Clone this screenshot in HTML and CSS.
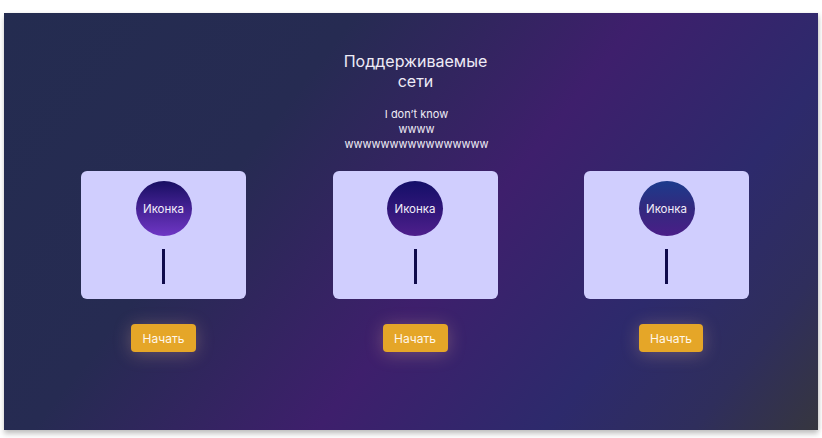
FILE: index.html
```html
<!DOCTYPE html>
<html lang="ru">
<head>
<meta charset="utf-8">
<link rel="stylesheet" href="styles.css">
</head>
<body>
<main class="panel">
  <header class="intro">
    <h1 class="title"><span class="line">Поддерживаемые</span><span class="line">сети</span></h1>
    <p class="subtitle"><span class="line">I don’t know</span><span class="line">wwww</span><span class="line">wwwwwwwwwwwwwwww</span></p>
  </header>
  <section class="networks">
    <div class="network">
      <div class="card">
        <div class="icon icon-1">Иконка</div>
        <div class="bar"></div>
      </div>
      <button class="start">Начать</button>
    </div>
    <div class="network">
      <div class="card">
        <div class="icon icon-2">Иконка</div>
        <div class="bar"></div>
      </div>
      <button class="start">Начать</button>
    </div>
    <div class="network">
      <div class="card">
        <div class="icon icon-3">Иконка</div>
        <div class="bar"></div>
      </div>
      <button class="start start-shift">Начать</button>
    </div>
  </section>
</main>
</body>
</html>
```
FILE: styles.css
```css
* { box-sizing: border-box; }
html, body { margin: 0; padding: 0; background: #ffffff; }
body {
  padding: 13px 4px 8px 4px;
  font-family: Inter, "Noto Sans", sans-serif;
}
.panel {
  height: 417px;
  background: linear-gradient(128deg, #242c50 0%, #262b52 31%, #3e1f6c 56%, #2d2a6c 76%, #2f2e5c 89%, #36363f 100%);
  box-shadow: 0 4px 5px rgba(0, 0, 0, 0.22), 2px 0 4px rgba(0, 0, 0, 0.08);
  padding-top: 38px;
  display: flex;
  flex-direction: column;
}
.intro {
  display: flex;
  flex-direction: column;
  align-items: center;
  color: #eeebf6;
  text-align: center;
  padding-left: 9px;
}
.line { display: block; }
.title {
  margin: 0;
  font-size: 16px;
  line-height: 20px;
  font-weight: 400;
}
.subtitle {
  margin: 16px 0 0 0;
  font-size: 11px;
  line-height: 15px;
  padding-left: 2px;
}
.networks {
  margin-top: 19px;
  display: flex;
  gap: 86.5px;
  padding-left: 77px;
}
.network {
  width: 165px;
  display: flex;
  flex-direction: column;
  align-items: center;
}
.card {
  width: 165px;
  height: 128px;
  background: #d0cefe;
  border-radius: 6px;
  padding-top: 10px;
  display: flex;
  flex-direction: column;
  align-items: center;
}
.icon {
  width: 56px;
  height: 55px;
  border-radius: 50%;
  display: flex;
  align-items: center;
  justify-content: center;
  color: #f2eefa;
  font-size: 11.5px;
}
.icon-1 { background: linear-gradient(180deg, #180f62 0%, #4a249a 55%, #6e36c4 100%); }
.icon-2 { background: linear-gradient(180deg, #140f68 0%, #2f1678 50%, #4e1f8c 100%); }
.icon-3 { background: linear-gradient(180deg, #1c3b8c 0%, #33297e 50%, #4a1e88 100%); }
.bar {
  margin-top: 13px;
  width: 3px;
  height: 35px;
  background: #0f0b4c;
}
.start {
  margin-top: 25px;
  width: 65px;
  height: 28px;
  border: none;
  border-radius: 4px;
  background: #e5a628;
  color: #fff7ea;
  font-family: Inter, "Noto Sans", sans-serif;
  font-size: 12px;
  padding: 0;
  box-shadow: 0 2px 18px rgba(255, 200, 150, 0.28);
}
.start-shift { margin-left: 9px; width: 64px; }
```
